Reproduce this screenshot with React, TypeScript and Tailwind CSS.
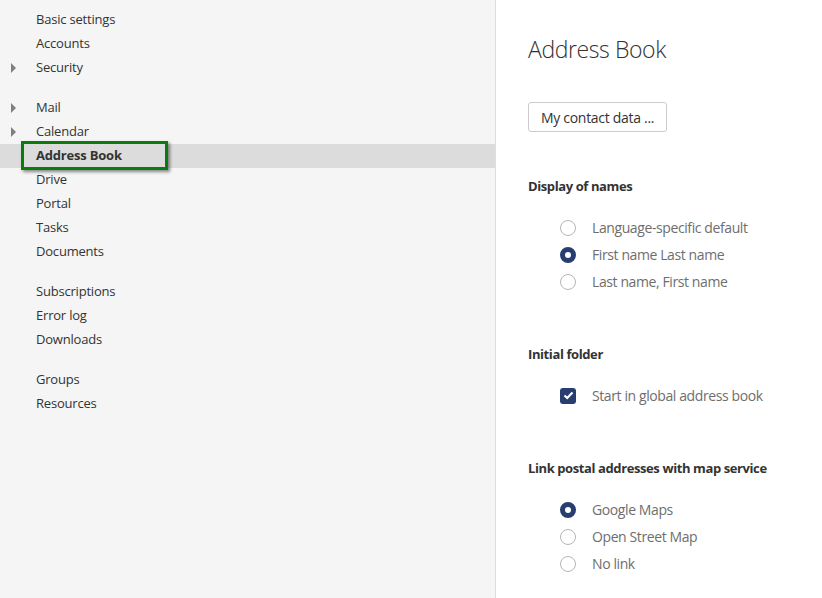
import React from "react";

const font = { fontFamily: '"Open Sans", "Noto Sans", sans-serif' };

function Caret() {
  return (
    <svg width="6" height="10" viewBox="0 0 6 10" className="absolute left-[11px] top-[7px]">
      <path d="M0 0 L5 5 L0 10 Z" fill="#808080" />
    </svg>
  );
}

function NavItem({ label, caret, selected }: { label: string; caret?: boolean; selected?: boolean }) {
  return (
    <div className={`relative h-6 flex items-center pl-[36px] ${selected ? "bg-[#dcdcdc]" : ""}`}>
      {caret && <Caret />}
      {selected && (
        <div className="absolute left-[21px] top-[-3px] w-[147px] h-[29px] border-[3px] border-[#0c7a0c] shadow-[2px_2px_3px_rgba(0,0,0,0.45)]" />
      )}
      <span className={`text-[13px] tracking-[-0.2px] ${selected ? "font-bold text-[#333]" : "text-[#333]"}`}>{label}</span>
    </div>
  );
}

function Radio({ label, checked }: { label: string; checked?: boolean }) {
  return (
    <div className="flex items-center h-[27px] pl-[32px]">
      {checked ? (
        <span className="w-4 h-4 rounded-full border-[5px] border-[#283e70] bg-white box-border" />
      ) : (
        <span className="w-4 h-4 rounded-full border border-[#b5b5b5] bg-white box-border" />
      )}
      <span className="ml-[16px] text-[14px] text-[#6e6e6e] tracking-[-0.4px]">{label}</span>
    </div>
  );
}

export default function App() {
  return (
    <div className="flex w-[822px] h-[598px] overflow-hidden bg-white" style={font}>
      <div className="w-[496px] shrink-0 bg-[#f5f5f5] border-r border-[#dedede] pt-[8px]">
        <NavItem label="Basic settings" />
        <NavItem label="Accounts" />
        <NavItem label="Security" caret />
        <div className="h-4" />
        <NavItem label="Mail" caret />
        <NavItem label="Calendar" caret />
        <NavItem label="Address Book" selected />
        <NavItem label="Drive" />
        <NavItem label="Portal" />
        <NavItem label="Tasks" />
        <NavItem label="Documents" />
        <div className="h-4" />
        <NavItem label="Subscriptions" />
        <NavItem label="Error log" />
        <NavItem label="Downloads" />
        <div className="h-4" />
        <NavItem label="Groups" />
        <NavItem label="Resources" />
      </div>
      <div className="flex-1 pl-[32px] pt-[33px]">
        <h1 className="text-[23px] font-light text-[#333] leading-[32px] tracking-[-0.4px]">Address Book</h1>
        <button className="mt-[37px] h-[30px] px-[12px] border border-[#cccccc] rounded-[3px] bg-white text-[14px] text-[#333] tracking-[-0.3px]">
          My contact data ...
        </button>
        <div className="mt-[45px] text-[13px] font-bold text-[#333] leading-[18px] tracking-[-0.4px]">Display of names</div>
        <div className="mt-[19px]">
          <Radio label="Language-specific default" />
          <Radio label="First name Last name" checked />
          <Radio label="Last name, First name" />
        </div>
        <div className="mt-[50px] text-[13px] font-bold text-[#333] leading-[18px] tracking-[-0.4px]">Initial folder</div>
        <div className="mt-[19px] flex items-center h-[27px] pl-[32px]">
          <span className="w-4 h-4 rounded-[3px] bg-[#283e70] flex items-center justify-center">
            <svg width="11" height="9" viewBox="0 0 11 9">
              <path d="M1.5 4.5 L4.2 7 L9.5 1.5" fill="none" stroke="white" strokeWidth="2.2" />
            </svg>
          </span>
          <span className="ml-[16px] text-[14px] text-[#6e6e6e] tracking-[-0.4px]">Start in global address book</span>
        </div>
        <div className="mt-[50px] text-[13px] font-bold text-[#333] leading-[18px] tracking-[-0.4px]">Link postal addresses with map service</div>
        <div className="mt-[19px]">
          <Radio label="Google Maps" checked />
          <Radio label="Open Street Map" />
          <Radio label="No link" />
        </div>
      </div>
    </div>
  );
}
